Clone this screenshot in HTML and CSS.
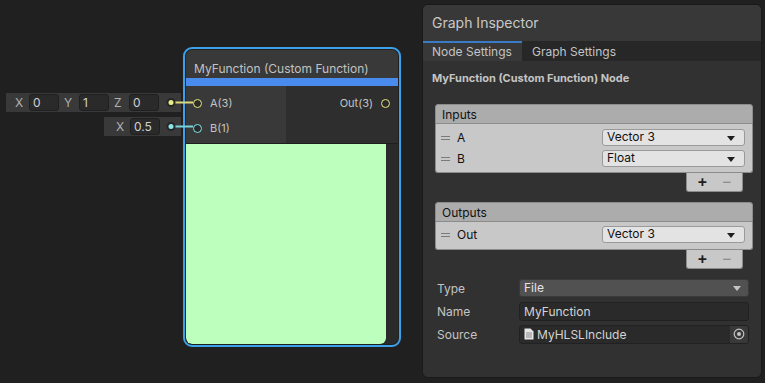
FILE: index.html
```html
<!DOCTYPE html>
<html>
<head>
<meta charset="utf-8">
<link rel="stylesheet" href="styles.css">
</head>
<body>
<div class="canvas">
  <div class="port-field pf-a">
    <span class="pf-label">X</span><span class="pf-box">0</span>
    <span class="pf-label">Y</span><span class="pf-box">1</span>
    <span class="pf-label">Z</span><span class="pf-box">0</span>
  </div>
  <div class="port-field pf-b">
    <span class="pf-label">X</span><span class="pf-box">0.5</span>
  </div>
  <div class="node-sel">
    <div class="node">
      <div class="node-title">MyFunction (Custom Function)</div>
      <div class="node-bar"></div>
      <div class="node-ports">
        <div class="ports-in">
          <div class="port"><span class="port-dot yellow"></span><span>A(3)</span></div>
          <div class="port"><span class="port-dot cyan"></span><span>B(1)</span></div>
        </div>
        <div class="ports-out">
          <div class="port out"><span>Out(3)</span><span class="port-dot yellow"></span></div>
        </div>
      </div>
      <div class="node-preview">
        <div class="preview-img"></div>
        <div class="preview-side"></div>
      </div>
    </div>
  </div>
  <svg class="wires" width="40" height="40" viewBox="0 0 40 40">
    <line x1="6" y1="10.5" x2="28" y2="10.5" stroke="#dada7c" stroke-width="2"/>
    <circle cx="6" cy="10.5" r="4.5" fill="#262626"/>
    <circle cx="6" cy="10.5" r="2.5" fill="#ecec86"/>
    <line x1="6" y1="34.5" x2="28" y2="34.5" stroke="#79d5db" stroke-width="2"/>
    <circle cx="6" cy="34.5" r="4.5" fill="#262626"/>
    <circle cx="6" cy="34.5" r="2.5" fill="#86e6ec"/>
  </svg>

  <div class="inspector">
    <div class="insp-header">Graph Inspector</div>
    <div class="insp-tabs">
      <div class="tab active">Node Settings</div>
      <div class="tab">Graph Settings</div>
    </div>
    <div class="insp-body">
      <div class="insp-title">MyFunction (Custom Function) Node</div>

      <div class="rlist">
        <div class="rl-head">Inputs</div>
        <div class="rl-body">
          <div class="rl-row"><span class="grip"></span><span class="rl-name">A</span><div class="dd-light">Vector 3<span class="arrow dark"></span></div></div>
          <div class="rl-row"><span class="grip"></span><span class="rl-name">B</span><div class="dd-light">Float<span class="arrow dark"></span></div></div>
        </div>
        <div class="rl-foot"><span class="plus">+</span><span class="minus">−</span></div>
      </div>

      <div class="rlist outputs">
        <div class="rl-head">Outputs</div>
        <div class="rl-body">
          <div class="rl-row"><span class="grip"></span><span class="rl-name">Out</span><div class="dd-light">Vector 3<span class="arrow dark"></span></div></div>
        </div>
        <div class="rl-foot"><span class="plus">+</span><span class="minus">−</span></div>
      </div>

      <div class="fields">
        <div class="frow"><span class="flabel">Type</span><div class="dd-dark">File<span class="arrow light"></span></div></div>
        <div class="frow"><span class="flabel">Name</span><div class="tfield">MyFunction</div></div>
        <div class="frow"><span class="flabel">Source</span>
          <div class="ofield">
            <svg class="file-ico" width="10" height="12" viewBox="0 0 10 12"><path d="M0.5 0.5h6l3 3v8h-9z" fill="#e6e6e6"/><path d="M2 5h6M2 7h6M2 9h6" stroke="#8a8a8a" stroke-width="1"/></svg>
            <span class="oname">MyHLSLInclude</span>
            <span class="obtn"><svg width="12" height="12" viewBox="0 0 12 12"><circle cx="6" cy="6" r="4.8" fill="none" stroke="#c4c4c4" stroke-width="1.2"/><circle cx="6" cy="6" r="2" fill="#c4c4c4"/></svg></span>
          </div>
        </div>
      </div>
    </div>
  </div>
</div>
</body>
</html>
```
FILE: styles.css
```css
* { box-sizing: border-box; }
html, body { margin: 0; padding: 0; }
body {
  background: #202020;
  font-family: Inter, "Noto Sans", sans-serif;
  color: #c4c4c4;
  width: 765px;
  height: 383px;
  overflow: hidden;
}
.canvas { position: relative; width: 765px; height: 383px; }

/* port input fields */
.port-field {
  position: absolute;
  height: 19px;
  background: #393939;
  display: flex;
  align-items: center;
  font-size: 12px;
}
.pf-a { left: 6px; top: 93px; width: 175px; padding-left: 9px; }
.pf-b { left: 104px; top: 117px; width: 77px; padding-left: 12px; }
.pf-label { color: #b0b0b0; width: 14px; }
.pf-box {
  width: 30px; height: 17px;
  background: #2a2a2a;
  border: 1px solid #1f1f1f;
  border-radius: 3px;
  color: #d2d2d2;
  padding-left: 3px;
  line-height: 15px;
  margin-right: 5px;
}
.pf-a .pf-box + .pf-label { width: 15px; }

.wires { position: absolute; left: 165px; top: 92px; }

/* node */
.node-sel {
  position: absolute;
  left: 183px; top: 47px;
  width: 218px; height: 300px;
  border: 2px solid #3ba2ea;
  border-radius: 9px;
  padding: 1px;
  background: #202020;
}
.node {
  width: 212px; height: 294px;
  border-radius: 6px;
  overflow: hidden;
  display: flex; flex-direction: column;
  background: #2a2a2a;
}
.node-title {
  height: 28px;
  background: #393939;
  font-size: 12px;
  color: #c2c2c2;
  padding: 12px 0 0 8px;
  line-height: 14px;
}
.node-bar { height: 8px; background: #4a8bee; }
.node-ports { height: 58px; display: flex; border-bottom: 1px solid #1e1e1e; }
.ports-in { width: 100px; background: #393939; padding-top: 10px; }
.ports-out { flex: 1; background: #2e2e2e; padding-top: 10px; }
.port { display: flex; align-items: center; height: 14px; margin-bottom: 11px; font-size: 11px; color: #c4c4c4; }
.port .port-dot { margin: 0 8px 0 7px; }
.port.out { justify-content: flex-end; }
.port.out .port-dot { margin: 0 8px 0 8px; }
.port-dot {
  width: 9px; height: 9px;
  border-radius: 50%;
  border: 1.5px solid #e8e883;
  background: #2a2a2a;
  flex: none;
}
.port-dot.cyan { border-color: #84e4ea; }
.node-preview { flex: 1; display: flex; }
.preview-img { width: 200px; height: 200px; background: #bdffbc; border-radius: 0 0 6px 6px; }
.preview-side { flex: 1; background: #2a2a2a; }

/* inspector */
.inspector {
  position: absolute;
  left: 422px; top: 4px;
  width: 340px; height: 374px;
  border: 1px solid #1a1a1a;
  border-radius: 6px;
  background: #313131;
  overflow: hidden;
  display: flex; flex-direction: column;
}
.insp-header {
  height: 36px;
  background: #383838;
  font-size: 14px;
  color: #c8c8c8;
  padding: 10px 0 0 9px;
  line-height: 16px;
}
.insp-tabs { height: 20px; background: #272727; display: flex; font-size: 12px; }
.tab { padding: 3px 10px 0 10px; line-height: 15px; color: #c4c4c4; }
.tab.active { width: 99px; background: #383838; border-top: 2px solid #3a7bc6; padding: 1px 0 0 9px; }
.insp-body { flex: 1; padding: 10px 8px 0 12px; }
.insp-title { font-size: 11px; font-weight: 700; line-height: 14px; color: #c4c4c4; margin-left: -3px; }

.rlist { margin-top: 19px; display: flex; flex-direction: column; color: #111; font-size: 12px; }
.rlist.outputs { margin-top: 10px; }
.rl-head {
  height: 20px;
  background: #acacac;
  border: 1px solid #8c8c8c;
  border-radius: 3px 3px 0 0;
  padding: 2px 0 0 6px;
  line-height: 15px;
}
.rl-body {
  background: #c8c8c8;
  border: 1px solid #8c8c8c;
  border-top: none;
  border-radius: 0 0 3px 3px;
  padding: 5px 7px 5px 5px;
}
.rlist.outputs .rl-body { padding: 4px 7px 6px 5px; }
.rl-row { display: flex; align-items: center; height: 17px; margin-bottom: 4px; }
.rl-row:last-child { margin-bottom: 0; }
.grip { width: 9px; height: 4px; border-top: 1px solid #7a7a7a; border-bottom: 1px solid #7a7a7a; margin-right: 7px; }
.rl-name { flex: 1; }
.dd-light {
  width: 143px; height: 17px;
  background: #e3e3e3;
  border: 1px solid #9a9a9a;
  border-radius: 3px;
  padding: 0 0 0 4px;
  line-height: 14px;
  position: relative;
  color: #111;
}
.arrow { position: absolute; right: 9px; top: 6px; width: 0; height: 0; border-left: 4px solid transparent; border-right: 4px solid transparent; border-top: 5px solid #1e1e1e; }
.arrow.light { border-top-color: #c4c4c4; top: 6px; right: 7px; }
.rl-foot {
  align-self: flex-end;
  width: 57px; height: 19px;
  margin-right: 10px;
  background: #c8c8c8;
  border: 1px solid #8c8c8c;
  border-top: none;
  border-radius: 0 0 3px 3px;
  display: flex; justify-content: space-between;
  padding: 0 10px 0 10px;
  font-size: 16px; line-height: 17px;
}
.plus { color: #1f1f1f; font-weight: 600; }
.minus { color: #8e8e8e; }

.fields { margin-top: 10px; display: flex; flex-direction: column; gap: 5px; padding-left: 2px; }
.frow { display: flex; align-items: center; height: 18px; font-size: 12px; }
.flabel { width: 82px; color: #c4c4c4; }
.dd-dark {
  width: 230px; height: 18px;
  background: #515151;
  border-radius: 3px;
  border: 1px solid #3a3a3a;
  padding-left: 4px; line-height: 16px;
  color: #e4e4e4;
  position: relative;
}
.tfield, .ofield {
  width: 230px; height: 19px;
  background: #2a2a2a;
  border: 1px solid #212121;
  border-radius: 3px;
  padding-left: 4px; line-height: 17px;
  color: #d4d4d4;
  display: flex; align-items: center;
}
.file-ico { margin-right: 3px; flex: none; }
.oname { flex: 1; }
.obtn { width: 18px; height: 17px; background: #393939; display: flex; align-items: center; justify-content: center; border-radius: 0 2px 2px 0; }
```
